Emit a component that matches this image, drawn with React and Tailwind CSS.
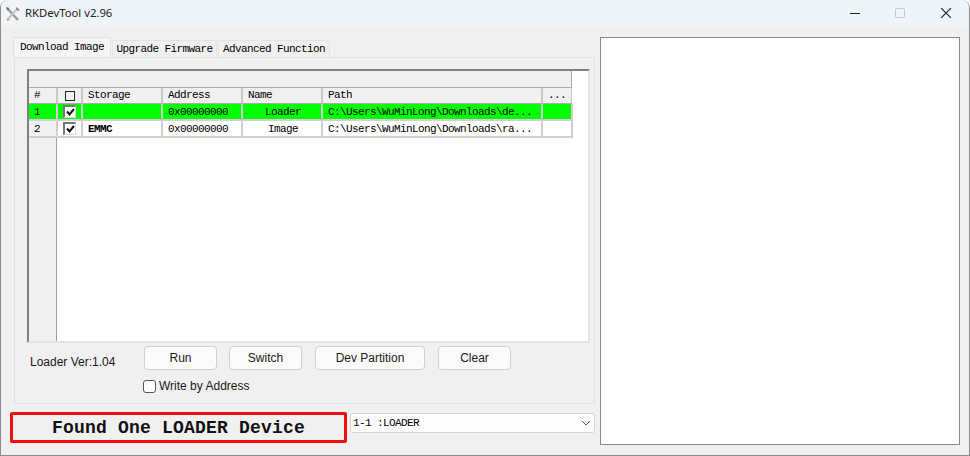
import React from "react";

const mono = "font-['Liberation_Mono',monospace] text-[11px] tracking-[-0.6px] text-[#000]";
const cols = "grid grid-cols-[29px_25px_80px_80px_80px_220px_30px] w-[545px]";

function Check() {
  return (
    <div className="w-[13px] h-[13px] bg-white border-t-2 border-l-2 border-t-[#777] border-l-[#777] border-r border-b border-r-[#ddd] border-b-[#ddd] flex items-center justify-center">
      <svg width="9" height="9" viewBox="0 0 9 9">
        <path d="M1 3.5 L3.5 6.5 L8 1" fill="none" stroke="#111" strokeWidth="2" />
      </svg>
    </div>
  );
}

function HeadCell({ children, center }) {
  return (
    <div className={`h-[16px] border-r-2 border-b border-r-[#c8c8c8] border-b-[#aaa] flex items-center ${center ? "justify-center" : "pl-[5px]"} ${mono}`}>
      {children}
    </div>
  );
}

function Row({ num, storage, name, path, green }) {
  const bg = green ? "bg-[#00ff00]" : "bg-white";
  const cell = `h-[17px] border-r-2 border-b-2 border-r-[#d0d0d0] border-b-[#d0d0d0] flex items-center ${bg} ${mono}`;
  return (
    <div className={cols}>
      <div className={`h-[17px] border-r-2 border-b-2 border-r-[#d0d0d0] border-b-[#d0d0d0] flex items-center pl-[5px] pt-[1px] ${green ? "bg-[#00ff00]" : "bg-[#f0f0f0]"} ${mono}`}>{num}</div>
      <div className={`${cell} pl-[5px]`}><Check /></div>
      <div className={`${cell} pl-[5px] pt-[1px] font-bold`}>{storage}</div>
      <div className={`${cell} pl-[5px] pt-[1px]`}>0x00000000</div>
      <div className={`${cell} justify-center pl-[2px] pt-[1px]`}>{name}</div>
      <div className={`${cell} pl-[5px] pt-[1px]`}>{path}</div>
      <div className={cell}></div>
    </div>
  );
}

function Btn({ w, children }) {
  return (
    <button className={`${w} h-[24px] bg-[#fbfbfb] border border-[#d0d0d0] rounded-[4px] text-[12px] text-[#1a1a1a] font-['Liberation_Sans',sans-serif] flex items-center justify-center`}>
      {children}
    </button>
  );
}

function Tab({ children, active, w }) {
  return (
    <div className={`${w} ${active ? "h-[20px] bg-[#f5f5f5] border-[#e2e2e2] pb-[1px]" : "h-[17px] bg-[#f0f0f0] border-[#e4e4e4] pt-[1px]"} border-t border-l border-r flex items-center justify-center ${mono}`}>
      {children}
    </div>
  );
}

export default function App() {
  return (
    <div className="w-[970px] h-[456px] bg-[#f0f0f0] border-l border-r border-b border-[#8c8c8c] rounded-t-[8px] overflow-hidden font-['Liberation_Sans',sans-serif]">
      {/* title bar */}
      <div className="h-[26px] bg-[#eff4f9] flex items-center">
        <svg className="ml-[4px] mb-[-2px]" width="16" height="16" viewBox="0 0 16 16">
          <path d="M2 2 L13 14" stroke="#9a9a9a" strokeWidth="2.4" />
          <path d="M13 2 L3 13" stroke="#c4c4c4" strokeWidth="2" />
          <path d="M1 1 L4 2 L3 5 Z" fill="#666" />
          <path d="M2 12 L5 14 L2 15 Z" fill="#d6a23a" />
          <path d="M11 1 L15 4 L13 5 L11 3 Z" fill="#888" />
        </svg>
        <span className="ml-[4px] text-[11.3px] text-[#222] font-['Noto_Sans',sans-serif]">RKDevTool v2.96</span>
        <div className="ml-auto flex items-center h-full">
          <svg width="10" height="10" viewBox="0 0 10 10"><path d="M0 5.5 H10" stroke="#222" /></svg>
          <svg className="ml-[35px]" width="10" height="10" viewBox="0 0 10 10"><rect x="0.5" y="0.5" width="9" height="9" rx="1" fill="none" stroke="#c4c8cc" /></svg>
          <svg className="ml-[36px] mr-[18px]" width="10" height="10" viewBox="0 0 10 10"><path d="M0 0 L10 10 M10 0 L0 10" stroke="#222" strokeWidth="1.1" /></svg>
        </div>
      </div>

      <div className="flex pt-[11px] pl-[9px]">
        {/* left side */}
        <div className="w-[585px]">
          <div className="pl-[3px] h-[20px] flex items-end gap-[1px]">
            <Tab active w="w-[98px]">Download Image</Tab>
            <Tab w="w-[105px]">Upgrade Firmware</Tab>
            <Tab w="w-[112px]">Advanced Function</Tab>
          </div>
          <div className="ml-[4px] w-[581px] h-[347px] border border-[#e2e2e2] pt-[11px] pl-[12px]">
            {/* table */}
            <div className="w-[563px] h-[274px] bg-white border-t-2 border-l-2 border-t-[#808080] border-l-[#808080] border-r-2 border-b-2 border-r-[#e4e4e4] border-b-[#e4e4e4] relative">
              <div className="absolute left-0 top-0 bottom-0 w-[28px] bg-[#f0f0f0] border-r border-[#a0a0a0]"></div>
              <div className="relative">
                <div className="h-[17px] w-[543px] bg-[#f0f0f0] border-r border-b border-[#aaa]"></div>
                <div className="bg-[#f0f0f0] w-[543px] overflow-hidden">
                  <div className={cols}>
                    <HeadCell>#</HeadCell>
                    <HeadCell center>
                      <div className="w-[10px] h-[10px] border border-[#222]"></div>
                    </HeadCell>
                    <HeadCell>Storage</HeadCell>
                    <HeadCell>Address</HeadCell>
                    <HeadCell>Name</HeadCell>
                    <HeadCell>Path</HeadCell>
                    <HeadCell center>...</HeadCell>
                  </div>
                </div>
                <Row num="1" storage="" name="Loader" path="C:\Users\WuMinLong\Downloads\de..." green />
                <Row num="2" storage="EMMC" name="Image" path="C:\Users\WuMinLong\Downloads\ra..." />
              </div>
            </div>
            {/* controls */}
            <div className="flex pt-[3px]">
              <div className="w-[117px] pl-[3px] pt-[7px] text-[12px] text-[#1a1a1a]">Loader Ver:1.04</div>
              <div>
                <div className="flex">
                  <Btn w="w-[73px]">Run</Btn>
                  <div className="w-[12px]"></div>
                  <Btn w="w-[73px]">Switch</Btn>
                  <div className="w-[13px]"></div>
                  <Btn w="w-[110px]">Dev Partition</Btn>
                  <div className="w-[13px]"></div>
                  <Btn w="w-[73px]">Clear</Btn>
                </div>
                <div className="flex items-center mt-[7px] ml-[-1px]">
                  <div className="w-[13px] h-[13px] bg-white border border-[#555] rounded-[3px]"></div>
                  <span className="ml-[3px] text-[12px] text-[#1a1a1a]">Write by Address</span>
                </div>
              </div>
            </div>
          </div>
          {/* status row */}
          <div className="flex mt-[8px]">
            <div className="w-[337px] h-[31px] bg-[#f0f0f0] border-[3px] border-[#ee1111] rounded-[2px] flex items-center justify-center pt-[2px] font-['Liberation_Mono',monospace] text-[18px] tracking-[0.2px] font-bold text-[#111]">
              Found One LOADER Device
            </div>
            <div className="ml-[3px] mt-[1px] w-[245px] h-[20px] bg-[#fdfdfd] border border-[#d4d4d4] rounded-[3px] flex items-center pl-[2px] pr-[3px] justify-between">
              <span className={mono}>{"1-1 :LOADER"}</span>
              <svg width="10" height="10" viewBox="0 0 10 10"><path d="M1 3 L5 7 L9 3" fill="none" stroke="#555" /></svg>
            </div>
          </div>
        </div>

        {/* right box */}
        <div className="ml-[5px] w-[360px] h-[408px] bg-white border border-[#8a8a8a]"></div>
      </div>
    </div>
  );
}
